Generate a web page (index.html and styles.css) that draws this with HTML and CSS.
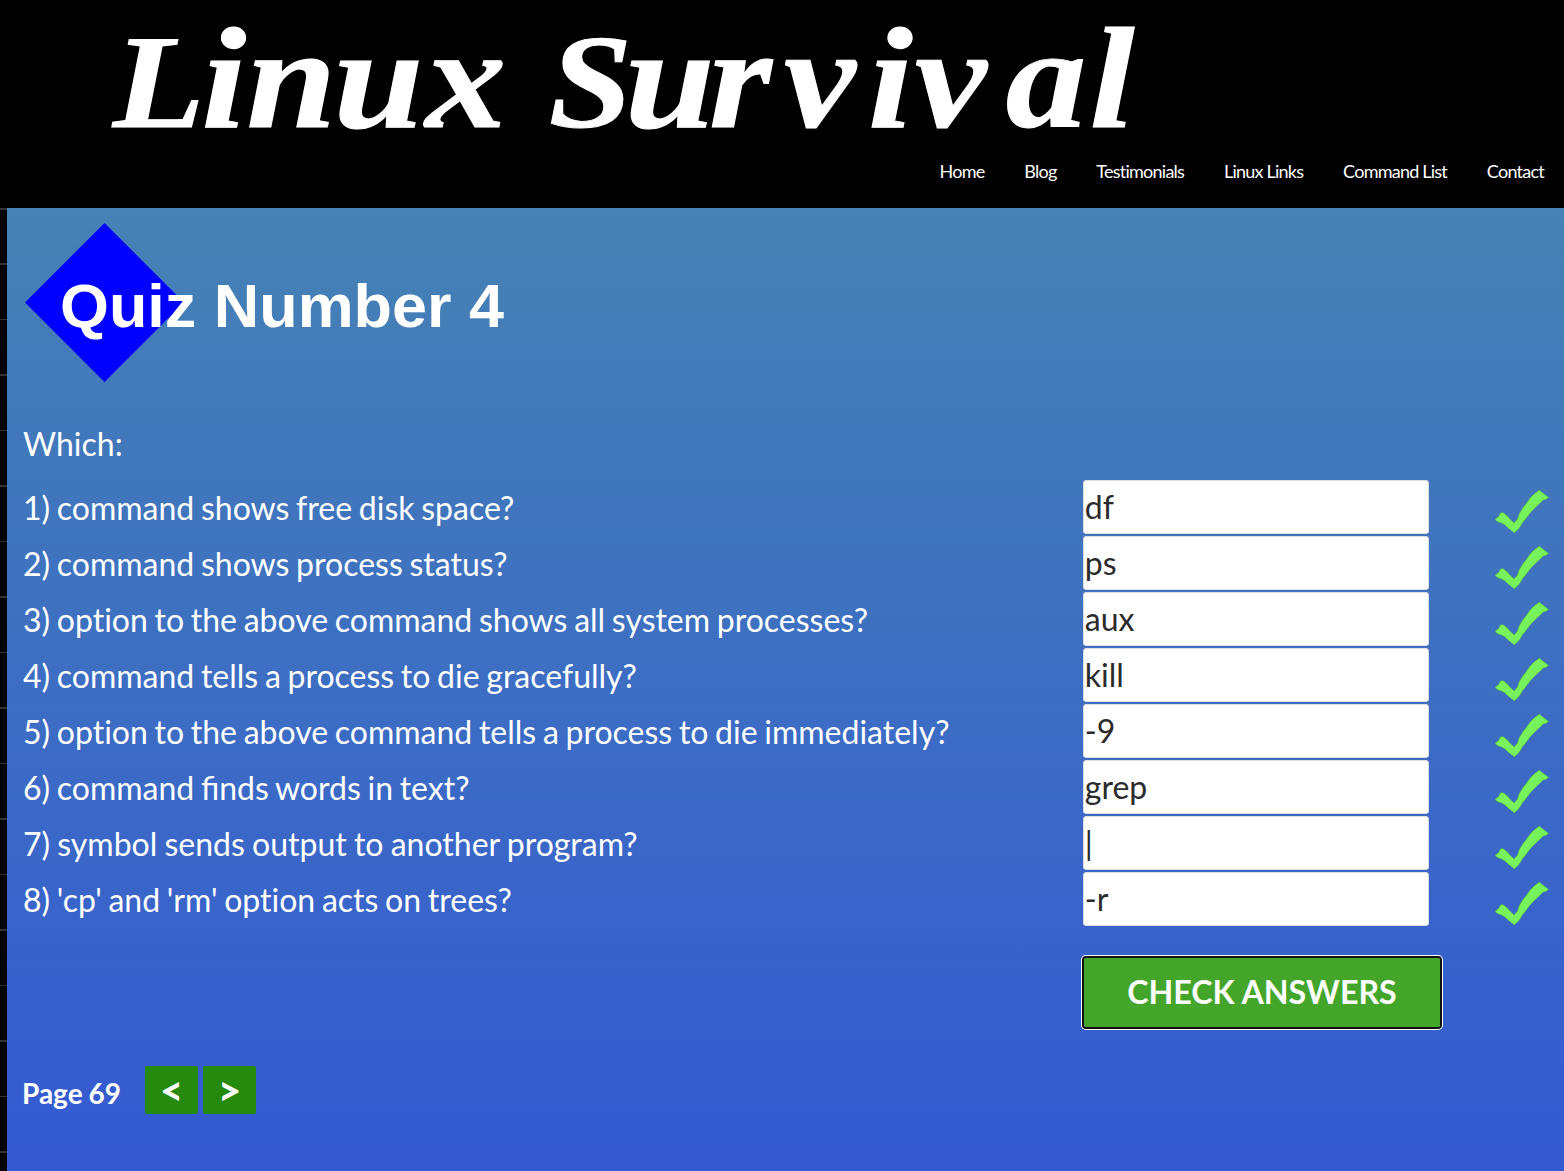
FILE: index.html
```html
<!DOCTYPE html>
<html lang="en">
<head>
<meta charset="utf-8">
<title>Linux Survival</title>
<link rel="stylesheet" href="styles.css">
</head>
<body>
<svg class="defs" aria-hidden="true"><symbol id="check" viewBox="0 0 54 45"><path d="M0 30.3 3.3 27.7 5.7 23.5 8.3 23.7 12 26.5 15 30 19 33.7 22.3 30.3 24.3 24.3 28 18.5 31.7 13.7 35 9 39 5 44.3 1 48.3 4.3 53.7 8.3 51 10.5 48.3 11 43.3 16 39 20 35 24.3 31 29.5 27.7 33.7 24.3 39.3 19.3 44 13.3 39.3 10 36 6.7 34.3 1.7 32.3Z"/></symbol></svg>
<header class="header">
  <svg class="logo" viewBox="0 0 1200 150" role="img" aria-label="Linux Survival">
    <g transform="translate(0 127) scale(1.12 1)">
      <text y="0" x="101 180 220 298 380"><tspan class="cap">L</tspan>inux</text>
      <text y="0" x="490 558 633 700 775 817 898 973"><tspan class="cap">S</tspan>urvival</text>
    </g>
  </svg>
  <nav class="nav"><a>Home</a><a>Blog</a><a>Testimonials</a><a>Linux Links</a><a>Command List</a><a>Contact</a></nav>
</header>
<main class="page">
  <div class="title">
    <svg class="banner" viewBox="0 0 500 160"><path class="diamond" d="M1 79.5 80.5 0 160 79.5 80.5 159Z"/><text x="36" y="104" textLength="444" lengthAdjust="spacingAndGlyphs">Quiz Number 4</text></svg>
  </div>
  <p class="lead">Which:</p>
  <form class="quiz">
    <label>1) command shows free disk space?</label><input value="df"><svg><use href="#check"/></svg>
    <label>2) command shows process status?</label><input value="ps"><svg><use href="#check"/></svg>
    <label>3) option to the above command shows all system processes?</label><input value="aux"><svg><use href="#check"/></svg>
    <label>4) command tells a process to die gracefully?</label><input value="kill"><svg><use href="#check"/></svg>
    <label>5) option to the above command tells a process to die immediately?</label><input value="-9"><svg><use href="#check"/></svg>
    <label class="ligatures">6) command finds words in text?</label><input value="grep"><svg><use href="#check"/></svg>
    <label class="roomy">7) symbol sends output to another program?</label><input value="|"><svg><use href="#check"/></svg>
    <label>8) 'cp' and 'rm' option acts on trees?</label><input value="-r"><svg><use href="#check"/></svg>
    <button class="submit" type="button">CHECK ANSWERS</button>
  </form>
  <footer class="pager"><span>Page 69</span><button type="button">&lt;</button><button type="button">&gt;</button></footer>
</main>
</body>
</html>
```
FILE: styles.css
```css
* { box-sizing: border-box; }
body {
  margin: 0;
  height: 1171px;
  overflow: hidden;
  display: flex;
  flex-direction: column;
  background: #000;
  color: #fff;
  font-family: Lato, sans-serif;
}
.defs { display: none; }
.header { height: 208px; flex: none; background: #000; }
.logo { display: block; width: 1200px; height: 150px; overflow: visible; }
.logo text {
  fill: #fff;
  stroke: #fff;
  stroke-width: 1;
  font: italic bold 144px "Liberation Serif", serif;
}
.logo .cap { font-size: 134px; }
.nav {
  display: flex;
  justify-content: flex-end;
  gap: 39.8px;
  padding-right: 20px;
  height: 42px;
  align-items: center;
  font-size: 18px;
  letter-spacing: -0.75px;
  word-spacing: -0.2px;
}
.page {
  flex: 1;
  margin-left: 7px;
  padding: 15px 0 0 16px;
  background: linear-gradient(#4682b4, #3459d2);
  position: relative;
}
.page::before {
  content: "";
  position: absolute;
  left: -7px;
  top: 0;
  bottom: 0;
  width: 7px;
  background: repeating-linear-gradient(#333 0 1.5px, #000 1.5px 55.5px);
}
.title { height: 190px; padding-left: 1px; }
.banner { display: block; width: 500px; height: 160px; }
.diamond { fill: #00f; }
.banner text { fill: #fff; font: bold 62px "Liberation Sans", sans-serif; }
.lead { margin: 0; height: 67px; line-height: 62px; font-size: 32px; }
.quiz {
  display: grid;
  grid-template-columns: 1060px 346px 54px;
  grid-auto-rows: 54px;
  row-gap: 2px;
  align-items: center;
  font-size: 32px;
}
.quiz label { white-space: nowrap; word-spacing: -1.5px; font-variant-ligatures: none; }
.quiz .ligatures { font-variant-ligatures: normal; }
.quiz .roomy { word-spacing: -1px; }
.quiz input {
  width: 346px;
  height: 54px;
  padding: 0 1px 2px 0.8px;
  border: 1px solid #ddd;
  border-radius: 3px;
  background: #fff;
  color: #2b2b2b;
  font: 32px Lato, sans-serif;
}
.quiz svg { width: 54px; height: 45px; margin-left: 66px; margin-top: 8px; fill: #78f25a; stroke: #4e9a55; stroke-width: 0.6; }
.submit {
  grid-column: 2;
  align-self: start;
  width: 356px;
  height: 69px;
  margin: 30px 0 0 1px;
  padding: 0 0 3px;
  border: 0;
  border-radius: 2px;
  outline: 2px solid #101010;
  box-shadow: 0 0 0 3px #fff;
  background: #43a62b;
  color: #fff;
  font: bold 32.2px Lato, sans-serif;
}
.pager { display: flex; align-items: center; height: 48px; margin-top: 84px; font-size: 28px; font-weight: bold; }
.pager span { width: 123px; margin-left: -1px; padding-top: 5px; word-spacing: -1px; }
.pager button {
  width: 53px;
  height: 48px;
  margin-right: 5px;
  padding: 0;
  border: 0;
  border-radius: 2px;
  background: #268a0e;
  color: #fff;
  font: 900 40px/40px Lato, sans-serif;
}
```
